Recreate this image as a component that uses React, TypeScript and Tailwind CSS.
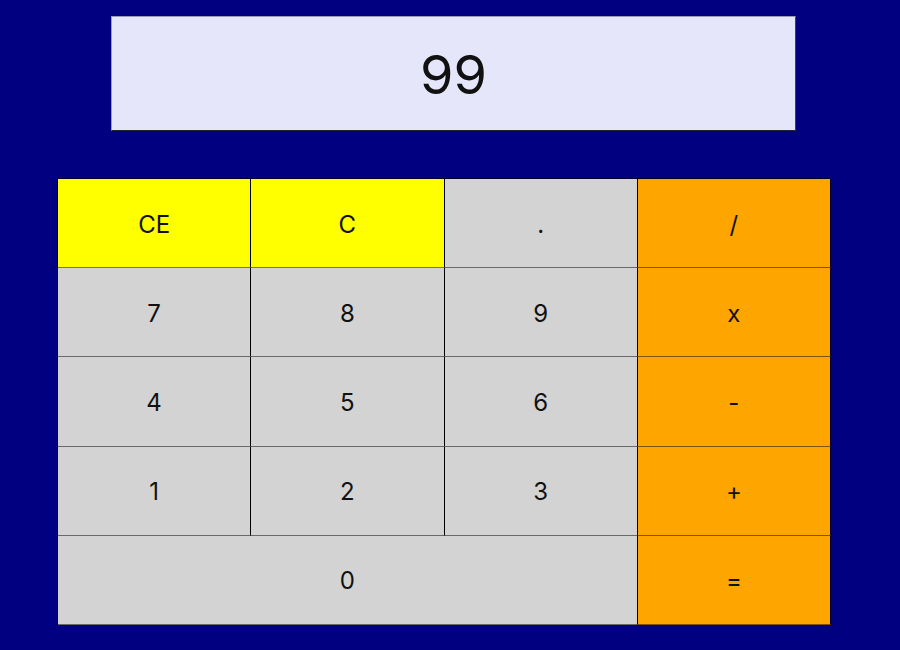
const keys: { label: string; bg: string; span?: boolean }[] = [
  { label: 'CE', bg: 'bg-[#ffff00]' },
  { label: 'C', bg: 'bg-[#ffff00]' },
  { label: '.', bg: 'bg-[#d3d3d3]' },
  { label: '/', bg: 'bg-[#ffa500]' },
  { label: '7', bg: 'bg-[#d3d3d3]' },
  { label: '8', bg: 'bg-[#d3d3d3]' },
  { label: '9', bg: 'bg-[#d3d3d3]' },
  { label: 'x', bg: 'bg-[#ffa500]' },
  { label: '4', bg: 'bg-[#d3d3d3]' },
  { label: '5', bg: 'bg-[#d3d3d3]' },
  { label: '6', bg: 'bg-[#d3d3d3]' },
  { label: '-', bg: 'bg-[#ffa500]' },
  { label: '1', bg: 'bg-[#d3d3d3]' },
  { label: '2', bg: 'bg-[#d3d3d3]' },
  { label: '3', bg: 'bg-[#d3d3d3]' },
  { label: '+', bg: 'bg-[#ffa500]' },
  { label: '0', bg: 'bg-[#d3d3d3]', span: true },
  { label: '=', bg: 'bg-[#ffa500]' },
]

export default function App() {
  return (
    <div className="w-[900px] h-[650px] bg-[#000080] font-['Inter',sans-serif] text-black overflow-hidden">
      {/* display */}
      <div className="pt-[16px] pl-[111px]">
        <div className="w-[685px] h-[115px] bg-[#e6e6fa] border border-[#9a9ab0] border-b-[#20203a] border-r-[#40405a] flex items-center justify-center">
          <span className="text-[54px] leading-none pt-[2px] text-[#111]">99</span>
        </div>
      </div>

      {/* keypad */}
      <div className="mt-[47px] ml-[57px] w-[774px] grid grid-cols-4 border-t border-l border-black/70">
        {keys.map((k) => (
          <button
            key={k.label}
            className={`${k.bg} ${k.span ? 'col-span-3' : ''} h-[89.2px] border-r border-b border-r-black border-b-black/50 flex items-center justify-center pt-[3px] text-[24px] leading-none text-[#111]`}
          >
            {k.label}
          </button>
        ))}
      </div>
    </div>
  )
}
